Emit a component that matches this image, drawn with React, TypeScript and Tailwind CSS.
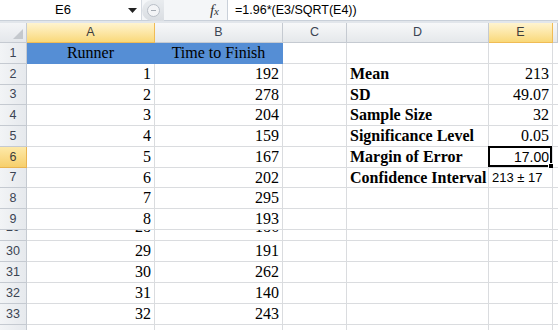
import React from "react";

const colW = ["w-[128px]", "w-[128px]", "w-[64px]", "w-[142px]", "w-[64px]", "flex-1"];
const letters = ["A", "B", "C", "D", "E", ""];

type Cell = {
  v?: string;
  bold?: boolean;
  sans?: boolean;
  left?: boolean;
  center?: boolean;
  blue?: boolean;
  sel?: boolean;
};

type RowData = { n: number; h: string; cells: Cell[] };

const rows: RowData[] = [
  { n: 1, h: "h-[21px]", cells: [{ v: "Runner", center: true, blue: true }, { v: "Time to Finish", center: true, blue: true }, {}, {}, {}] },
  { n: 2, h: "h-[21px]", cells: [{ v: "1" }, { v: "192" }, {}, { v: "Mean", bold: true, left: true }, { v: "213" }] },
  { n: 3, h: "h-[20px]", cells: [{ v: "2" }, { v: "278" }, {}, { v: "SD", bold: true, left: true }, { v: "49.07" }] },
  { n: 4, h: "h-[21px]", cells: [{ v: "3" }, { v: "204" }, {}, { v: "Sample Size", bold: true, left: true }, { v: "32" }] },
  { n: 5, h: "h-[21px]", cells: [{ v: "4" }, { v: "159" }, {}, { v: "Significance Level", bold: true, left: true }, { v: "0.05" }] },
  { n: 6, h: "h-[21px]", cells: [{ v: "5" }, { v: "167" }, {}, { v: "Margin of Error", bold: true, left: true }, { v: "17.00", sans: true, sel: true }] },
  { n: 7, h: "h-[20px]", cells: [{ v: "6" }, { v: "202" }, {}, { v: "Confidence Interval", bold: true, left: true }, { v: "213 ± 17", sans: true, left: true }] },
  { n: 8, h: "h-[21px]", cells: [{ v: "7" }, { v: "295" }, {}, {}, {}] },
  { n: 9, h: "h-[21px]", cells: [{ v: "8" }, { v: "193" }, {}, {}, {}] },
];

const lower: RowData[] = [
  { n: 30, h: "h-[21px]", cells: [{ v: "29" }, { v: "191" }, {}, {}, {}] },
  { n: 31, h: "h-[21px]", cells: [{ v: "30" }, { v: "262" }, {}, {}, {}] },
  { n: 32, h: "h-[21px]", cells: [{ v: "31" }, { v: "140" }, {}, {}, {}] },
  { n: 33, h: "h-[21px]", cells: [{ v: "32" }, { v: "243" }, {}, {}, {}] },
  { n: 34, h: "h-[21px]", cells: [{}, {}, {}, {}, {}] },
];

function RowHead({ n, sel, up }: { n: number | string; sel?: boolean; up?: boolean }) {
  return (
    <div
      className={
        "w-[27px] shrink-0 h-full flex items-center justify-center text-[12.5px] border-r border-b " +
        (sel
          ? "bg-linear-to-b from-[#fde9a8] to-[#f7cf6b] border-[#e9b451] text-[#3c3c3c]"
          : "bg-linear-to-r from-[#f2f4f6] to-[#e6e9ed] border-[#c5cad1] text-[#3b4453]")
      }
    >
      <span className={up ? "-translate-y-[3px]" : ""}>{n}</span>
    </div>
  );
}

function SheetRow({ r, up }: { r: RowData; up?: boolean }) {
  const cells = [...r.cells, {}];
  return (
    <div className={"flex " + r.h}>
      <RowHead n={r.n} sel={r.n === 6} up={up} />
      {cells.map((c: Cell, i) => (
        <div
          key={i}
          className={
            colW[i] +
            " shrink-0 h-full relative flex items-center px-[3px] whitespace-nowrap border-r border-b " +
            (c.blue ? "bg-[#558ed5] border-[#558ed5] " : "bg-white border-[#dadcdf] ") +
            (c.center ? "justify-center " : c.left ? "justify-start " : "justify-end ") +
            (c.sans
              ? "font-['Liberation_Sans',sans-serif] text-[14px] "
              : "font-['Liberation_Serif',serif] text-[16px] ") +
            (c.bold ? "font-bold " : "") +
            "text-black"
          }
        >
          {c.v && (
            <span className={(c.v === "213 ± 17" ? "text-[13px] " : "") + (up ? "-translate-y-[3px]" : "")}>
              {c.v}
            </span>
          )}
          {c.sel && (
            <>
              <div className="absolute -left-px -top-px right-0 bottom-0 border-2 border-black pointer-events-none" />
              <div className="absolute -right-[2px] -bottom-[2px] w-[6px] h-[6px] bg-black border border-white" />
            </>
          )}
        </div>
      ))}
    </div>
  );
}

export default function App() {
  return (
    <div className="w-[558px] h-[330px] overflow-hidden bg-white font-['Liberation_Sans',sans-serif] select-none">
      {/* formula bar */}
      <div className="flex h-[21px] border-b border-[#c9d0d9] bg-white">
        <div className="w-[142px] shrink-0 flex items-center relative border-r border-[#d5dae1]">
          <span className="w-[126px] text-center text-[13px] text-black">E6</span>
          <svg width="9" height="5" viewBox="0 0 9 5" className="ml-[2px]">
            <path d="M0 0 L9 0 L4.5 5 Z" fill="#222" />
          </svg>
        </div>
        <div className="w-[85px] shrink-0 flex items-center bg-[#f4f6f8]">
          <div className="h-[21px] w-[22px] rounded-l-full bg-linear-to-b from-[#e9ecef] to-[#d9dde2] flex items-center justify-center">
            <div className="w-[13px] h-[13px] rounded-full border border-[#b9bfc7] bg-[#f3f4f6] flex items-center justify-center">
              <div className="w-[5px] h-px bg-[#a3a9b1]" />
            </div>
          </div>
          <span className="ml-auto mr-[8px] font-['Liberation_Serif',serif] italic text-[15px] text-[#333] leading-none">
            f<span className="text-[11px]">x</span>
          </span>
        </div>
        <div className="flex-1 flex items-center pl-[7px] border-l border-[#c9d0d9] text-[12.5px] text-black">
          =1.96*(E3/SQRT(E4))
        </div>
      </div>
      <div className="h-[2px] bg-[#e2e6eb]" />

      {/* column headers */}
      <div className="flex h-[20px]">
        <div className="w-[27px] shrink-0 relative bg-linear-to-b from-[#f4f5f7] to-[#e4e7eb] border-r border-b border-[#c5cad1]">
          <svg width="10" height="10" viewBox="0 0 10 10" className="absolute right-[3px] bottom-[3px]">
            <path d="M10 0 L10 10 L0 10 Z" fill="#c4c8cd" />
          </svg>
        </div>
        {letters.map((l, i) => {
          const sel = l === "A" || l === "E";
          return (
            <div
              key={i}
              className={
                colW[i] +
                " shrink-0 flex items-center justify-center text-[12.5px] border-r border-b " +
                (sel
                  ? "bg-linear-to-b from-[#fff4cf] to-[#f9d878] border-[#f0bc55] text-[#3c3c3c]"
                  : "bg-linear-to-b from-[#f7f8f9] to-[#e5e8eb] border-[#c5cad1] text-[#3b4453]")
              }
            >
              {l}
            </div>
          );
        })}
      </div>

      {rows.map((r) => (
        <SheetRow key={r.n} r={r} />
      ))}

      {/* partially hidden row 29 */}
      <div className="h-[11px] overflow-hidden flex flex-col justify-end">
        <div className="shrink-0">
          <SheetRow up r={{ n: 29, h: "h-[21px]", cells: [{ v: "28" }, { v: "186" }, {}, {}, {}] }} />
        </div>
      </div>

      {lower.map((r) => (
        <SheetRow key={r.n} r={r} />
      ))}
    </div>
  );
}
